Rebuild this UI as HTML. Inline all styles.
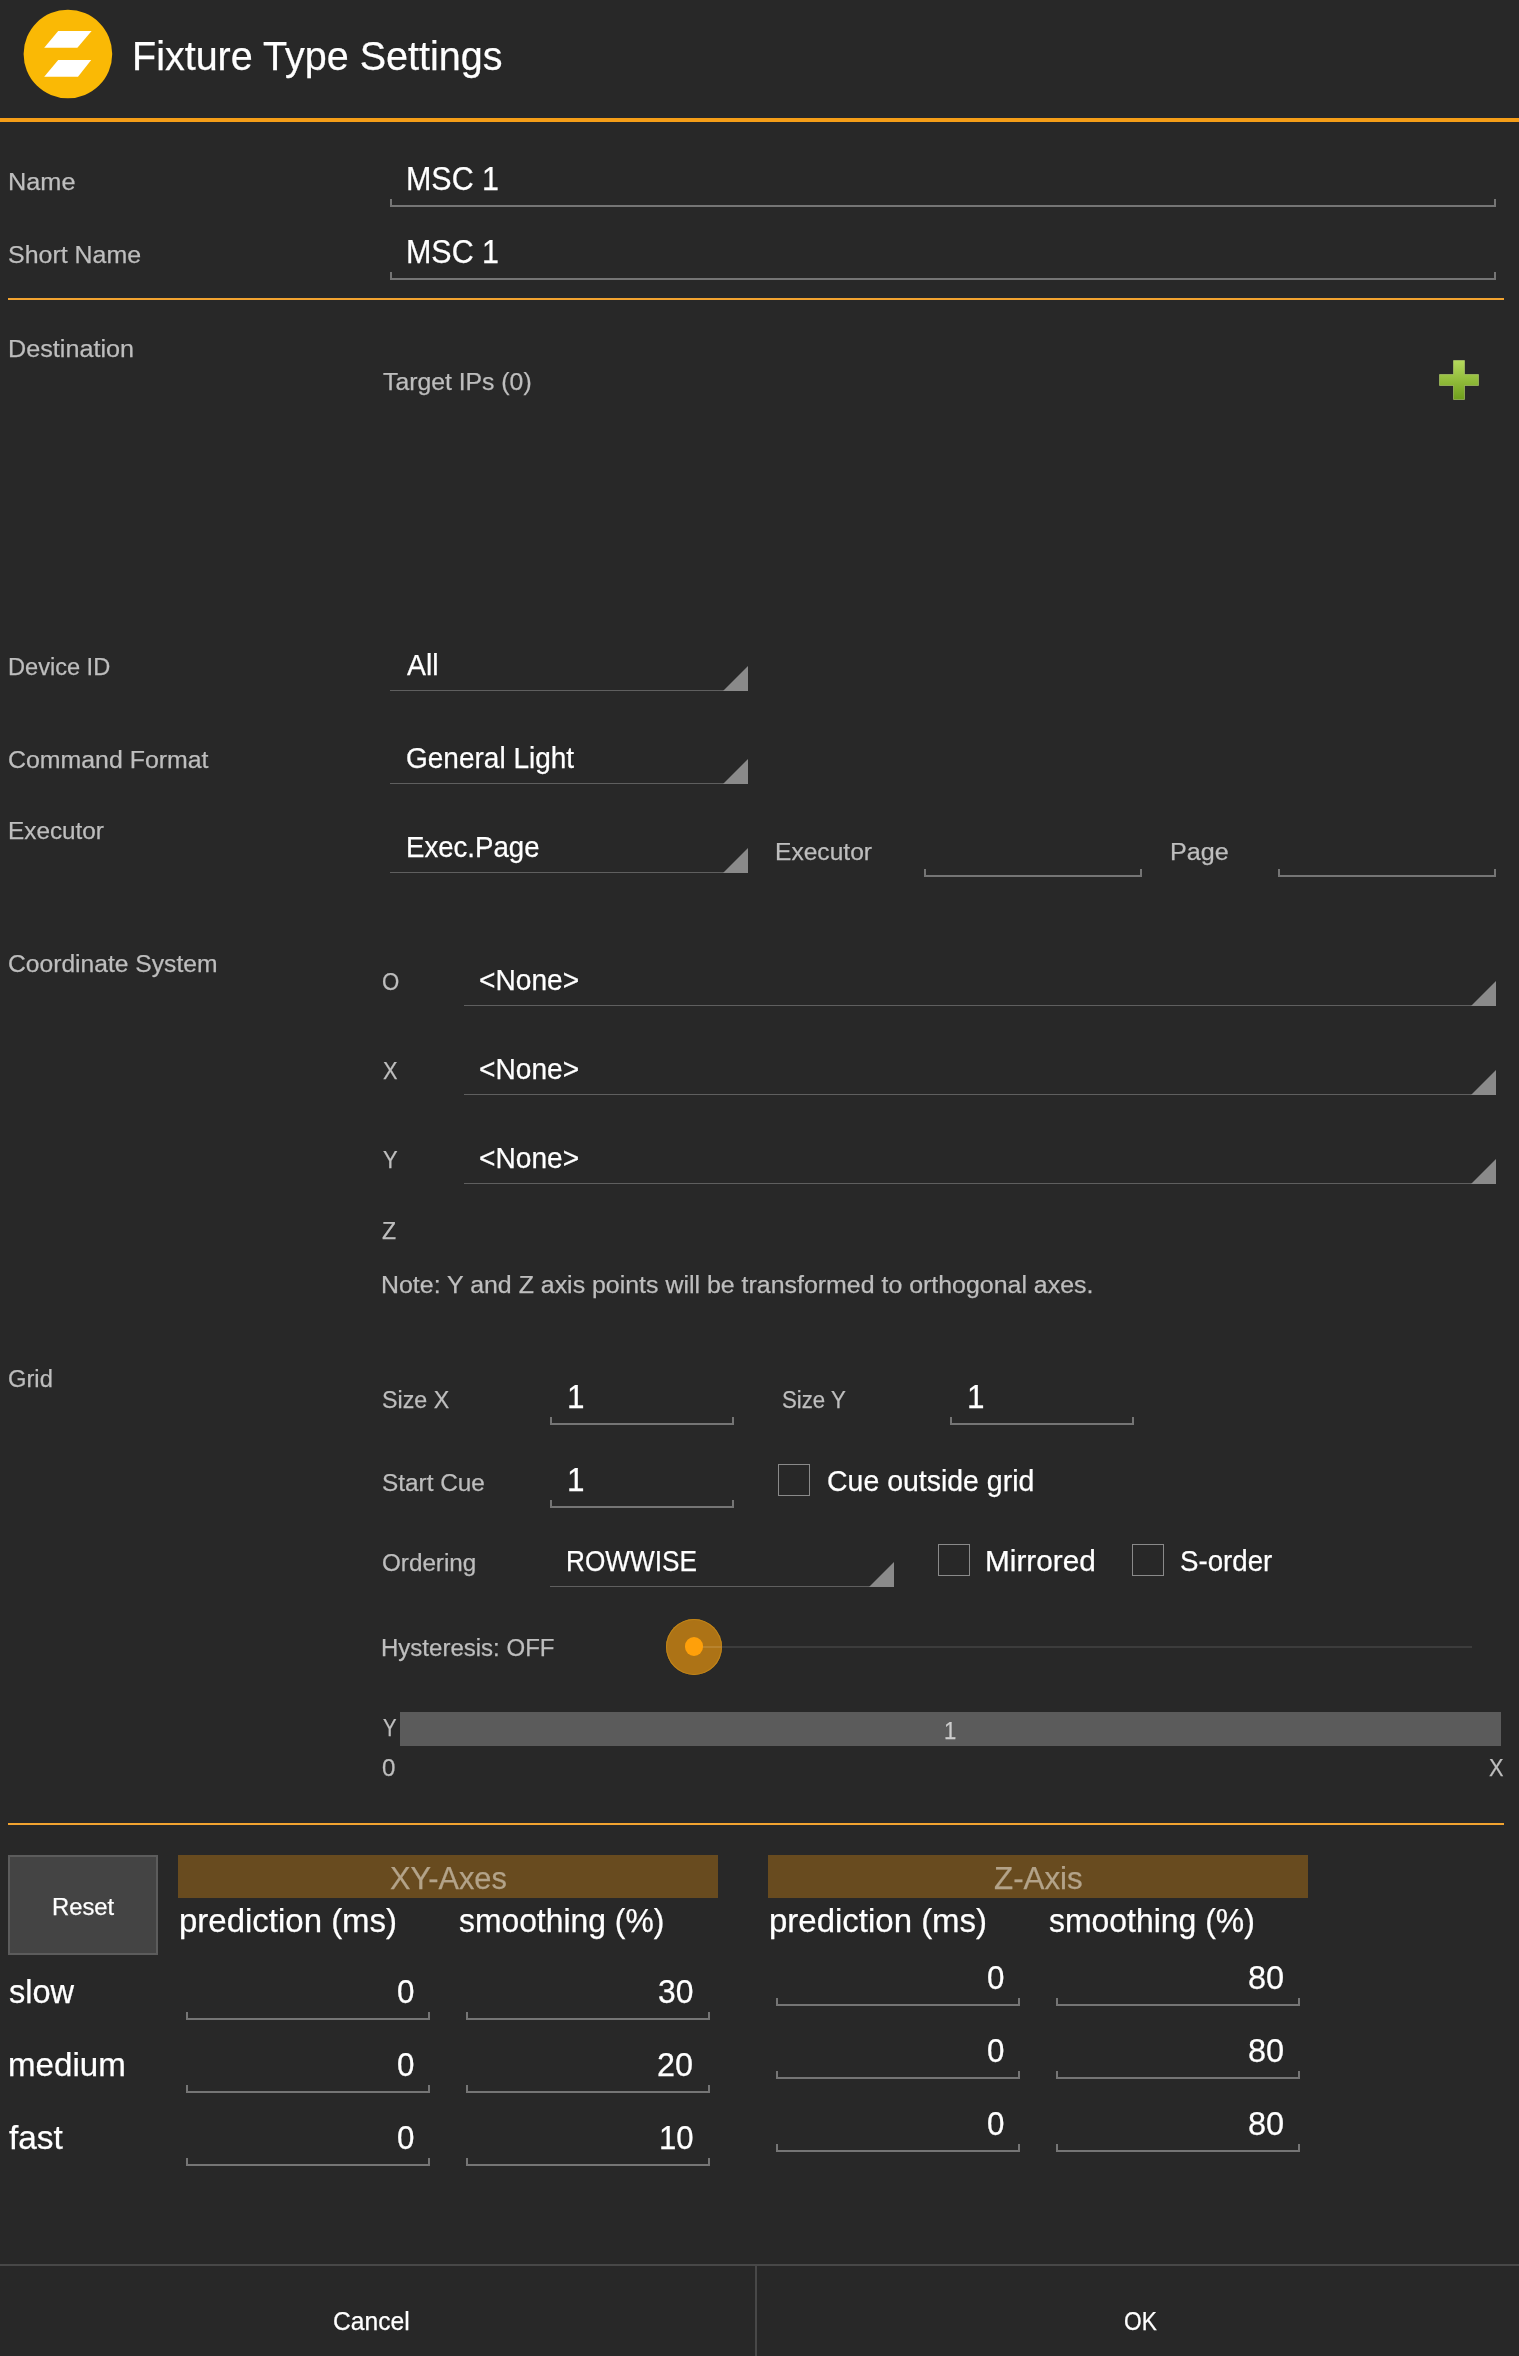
<!DOCTYPE html>
<html lang="en">
<head>
<meta charset="utf-8">
<title>Fixture Type Settings</title>
<style>
html,body{margin:0;padding:0;background:#282828;}
body{width:1519px;height:2356px;position:relative;overflow:hidden;font-family:"Liberation Sans", sans-serif;}
.t{position:absolute;white-space:pre;line-height:1em;transform-origin:0 0;display:block;-webkit-text-stroke:0.25px currentColor;}
.b{position:absolute;display:block;}
#txt{position:absolute;left:0;top:0;width:1519px;height:2356px;will-change:transform;}
.hl{background:#f2a330;}
.ed{border:2px solid #757575;border-top:0;box-sizing:border-box;height:8px;}
.sp{background:#5f5f5f;}
.tri{width:0;height:0;border-left:25px solid transparent;border-bottom:25px solid #8a8a8a;}
.cb{box-sizing:border-box;width:32px;height:32px;border:1px solid #8a8a8a;}

</style>
</head>
<body>
<svg class="b" style="left:22px;top:8px" width="92" height="92" viewBox="22 8 92 92"><circle cx="67.9" cy="54.05" r="44.3" fill="#fab905"/><polygon points="58.2,31 91.6,31 77.4,47.8 44.2,47.8" fill="#fff"/><polygon points="58.2,60 91.2,60 78,76.75 44.2,76.75" fill="#fff"/></svg>
<div class="b " style="left:0px;top:118px;width:1519px;height:4px;background:#f59e18"></div>
<div class="b hl" style="left:8px;top:298px;width:1496px;height:2px;"></div>
<div class="b hl" style="left:8px;top:1823px;width:1496px;height:2px;"></div>
<div class="b ed" style="left:390px;top:199px;width:1106px"></div>
<div class="b ed" style="left:390px;top:272px;width:1106px"></div>
<div class="b ed" style="left:924px;top:869px;width:218px"></div>
<div class="b ed" style="left:1278px;top:869px;width:218px"></div>
<div class="b ed" style="left:550px;top:1417px;width:184px"></div>
<div class="b ed" style="left:950px;top:1417px;width:184px"></div>
<div class="b ed" style="left:550px;top:1500px;width:184px"></div>
<div class="b ed" style="left:186px;top:2012px;width:244px"></div>
<div class="b ed" style="left:466px;top:2012px;width:244px"></div>
<div class="b ed" style="left:186px;top:2085px;width:244px"></div>
<div class="b ed" style="left:466px;top:2085px;width:244px"></div>
<div class="b ed" style="left:186px;top:2158px;width:244px"></div>
<div class="b ed" style="left:466px;top:2158px;width:244px"></div>
<div class="b ed" style="left:776px;top:1998px;width:244px"></div>
<div class="b ed" style="left:1056px;top:1998px;width:244px"></div>
<div class="b ed" style="left:776px;top:2071px;width:244px"></div>
<div class="b ed" style="left:1056px;top:2071px;width:244px"></div>
<div class="b ed" style="left:776px;top:2144px;width:244px"></div>
<div class="b ed" style="left:1056px;top:2144px;width:244px"></div>
<div class="b sp" style="left:390px;top:690px;width:358px;height:1px;"></div>
<div class="b tri" style="left:723px;top:666px"></div>
<div class="b sp" style="left:390px;top:783px;width:358px;height:1px;"></div>
<div class="b tri" style="left:723px;top:759px"></div>
<div class="b sp" style="left:390px;top:872px;width:358px;height:1px;"></div>
<div class="b tri" style="left:723px;top:848px"></div>
<div class="b sp" style="left:464px;top:1005px;width:1032px;height:1px;"></div>
<div class="b tri" style="left:1471px;top:981px"></div>
<div class="b sp" style="left:464px;top:1094px;width:1032px;height:1px;"></div>
<div class="b tri" style="left:1471px;top:1070px"></div>
<div class="b sp" style="left:464px;top:1183px;width:1032px;height:1px;"></div>
<div class="b tri" style="left:1471px;top:1159px"></div>
<div class="b sp" style="left:550px;top:1586px;width:344px;height:1px;"></div>
<div class="b tri" style="left:869px;top:1562px"></div>
<div class="b cb" style="left:778px;top:1464px"></div>
<div class="b cb" style="left:938px;top:1544px"></div>
<div class="b cb" style="left:1132px;top:1544px"></div>
<div class="b " style="left:694px;top:1646px;width:778px;height:2px;background:#3c3c3c"></div>
<div class="b" style="left:665.75px;top:1618.5px;width:56.5px;height:56.5px;border-radius:50%;background:#ad7316;box-shadow:inset 0 0 0 1px #c08418"></div>
<div class="b" style="left:694px;top:1646px;width:28px;height:2px;background:#b8832e"></div>
<div class="b" style="left:684.6px;top:1637.4px;width:18.8px;height:18.8px;border-radius:50%;background:#ffa00a"></div>
<div class="b " style="left:400px;top:1712px;width:1101px;height:34px;background:#5b5b5b"></div>
<svg class="b" style="left:1435px;top:356px" width="48" height="48" viewBox="1435 356 48 48"><defs><linearGradient id="pg" x1="0" y1="0" x2="0" y2="1"><stop offset="0" stop-color="#b5d95c"/><stop offset="1" stop-color="#6f9f1c"/></linearGradient></defs><path d="M1453.5 360.5h11v14h14v11h-14v14h-11v-14h-14v-11h14z" fill="url(#pg)" stroke="#c8e67a" stroke-opacity=".5" stroke-width="1"/></svg>
<div class="b " style="left:8px;top:1855px;width:150px;height:100px;background:#444;border:2px solid #5c5c5c;box-sizing:border-box"></div>
<div class="b " style="left:178px;top:1855px;width:540px;height:43px;background:#684b1f"></div>
<div class="b " style="left:768px;top:1855px;width:540px;height:43px;background:#684b1f"></div>
<div class="b " style="left:0px;top:2264px;width:1519px;height:2px;background:#484848"></div>
<div class="b " style="left:755px;top:2266px;width:2px;height:90px;background:#484848"></div>
<div id="txt">
<span class="t " style="left:131.94px;top:36px;font-size:41.20px;color:#ffffff;transform:scaleX(0.9593)">Fixture Type Settings</span>
<span class="t " style="left:7.83px;top:170px;font-size:24.72px;color:#bebebe;transform:scaleX(1.0239)">Name</span>
<span class="t " style="left:8.23px;top:243px;font-size:24.72px;color:#bebebe;transform:scaleX(1.0092)">Short Name</span>
<span class="t " style="left:7.84px;top:337px;font-size:24.72px;color:#bebebe;transform:scaleX(1.0189)">Destination</span>
<span class="t " style="left:382.60px;top:370px;font-size:24.72px;color:#bebebe;transform:scaleX(1.0018)">Target IPs (0)</span>
<span class="t " style="left:7.71px;top:655px;font-size:24.72px;color:#bebebe;transform:scaleX(0.9538)">Device ID</span>
<span class="t " style="left:8.36px;top:748px;font-size:24.72px;color:#bebebe;transform:scaleX(1.0067)">Command Format</span>
<span class="t " style="left:7.65px;top:819px;font-size:24.72px;color:#bebebe;transform:scaleX(0.9837)">Executor</span>
<span class="t " style="left:775.13px;top:840px;font-size:24.72px;color:#bebebe;transform:scaleX(0.9942)">Executor</span>
<span class="t " style="left:1169.59px;top:840px;font-size:24.72px;color:#bebebe;transform:scaleX(1.0176)">Page</span>
<span class="t " style="left:8.37px;top:952px;font-size:24.72px;color:#bebebe;transform:scaleX(0.9965)">Coordinate System</span>
<span class="t " style="left:382.10px;top:970px;font-size:24.72px;color:#bebebe;transform:scaleX(0.8976)">O</span>
<span class="t " style="left:382.67px;top:1059px;font-size:24.72px;color:#bebebe;transform:scaleX(0.8797)">X</span>
<span class="t " style="left:382.66px;top:1148px;font-size:24.72px;color:#bebebe;transform:scaleX(0.8867)">Y</span>
<span class="t " style="left:382.41px;top:1219px;font-size:24.72px;color:#bebebe;transform:scaleX(0.9341)">Z</span>
<span class="t " style="left:381.11px;top:1273px;font-size:24.72px;color:#bebebe;transform:scaleX(1.0081)">Note: Y and Z axis points will be transformed to orthogonal axes.</span>
<span class="t " style="left:8.41px;top:1367px;font-size:24.72px;color:#bebebe;transform:scaleX(0.9601)">Grid</span>
<span class="t " style="left:382.05px;top:1388px;font-size:24.72px;color:#bebebe;transform:scaleX(0.9398)">Size X</span>
<span class="t " style="left:782.10px;top:1388px;font-size:24.72px;color:#bebebe;transform:scaleX(0.8984)">Size Y</span>
<span class="t " style="left:382.00px;top:1471px;font-size:24.72px;color:#bebebe;transform:scaleX(0.9845)">Start Cue</span>
<span class="t " style="left:382.01px;top:1551px;font-size:24.72px;color:#bebebe;transform:scaleX(0.9802)">Ordering</span>
<span class="t " style="left:381.18px;top:1636px;font-size:24.72px;color:#bebebe;transform:scaleX(0.9717)">Hysteresis: OFF</span>
<span class="t " style="left:382.69px;top:1716px;font-size:24.72px;color:#bebebe;transform:scaleX(0.8220)">Y</span>
<span class="t " style="left:382.26px;top:1756px;font-size:24.72px;color:#bebebe;transform:scaleX(0.9759)">0</span>
<span class="t " style="left:1489.17px;top:1756px;font-size:24.72px;color:#bebebe;transform:scaleX(0.8797)">X</span>
<span class="t " style="left:944.24px;top:1719px;font-size:24.72px;color:#cdcdcd;transform:scaleX(0.8928)">1</span>
<span class="t " style="left:405.66px;top:163px;font-size:32.96px;color:#ffffff;transform:scaleX(0.9237)">MSC 1</span>
<span class="t " style="left:405.66px;top:236px;font-size:32.96px;color:#ffffff;transform:scaleX(0.9237)">MSC 1</span>
<span class="t " style="left:406.60px;top:650px;font-size:29.87px;color:#ffffff;transform:scaleX(0.9509)">All</span>
<span class="t " style="left:406.20px;top:743px;font-size:29.87px;color:#ffffff;transform:scaleX(0.9378)">General Light</span>
<span class="t " style="left:405.89px;top:832px;font-size:29.87px;color:#ffffff;transform:scaleX(0.9244)">Exec.Page</span>
<span class="t " style="left:479.33px;top:965px;font-size:29.87px;color:#ffffff;transform:scaleX(0.9427)">&lt;None&gt;</span>
<span class="t " style="left:479.33px;top:1054px;font-size:29.87px;color:#ffffff;transform:scaleX(0.9427)">&lt;None&gt;</span>
<span class="t " style="left:479.33px;top:1143px;font-size:29.87px;color:#ffffff;transform:scaleX(0.9427)">&lt;None&gt;</span>
<span class="t " style="left:566.74px;top:1381px;font-size:32.96px;color:#ffffff;transform:scaleX(0.9555)">1</span>
<span class="t " style="left:966.74px;top:1381px;font-size:32.96px;color:#ffffff;transform:scaleX(0.9555)">1</span>
<span class="t " style="left:566.74px;top:1464px;font-size:32.96px;color:#ffffff;transform:scaleX(0.9555)">1</span>
<span class="t " style="left:826.68px;top:1466px;font-size:29.87px;color:#ffffff;transform:scaleX(0.9533)">Cue outside grid</span>
<span class="t " style="left:566.01px;top:1546px;font-size:29.87px;color:#ffffff;transform:scaleX(0.8765)">ROWWISE</span>
<span class="t " style="left:984.72px;top:1546px;font-size:29.87px;color:#ffffff;transform:scaleX(0.9974)">Mirrored</span>
<span class="t " style="left:1180.35px;top:1546px;font-size:29.87px;color:#ffffff;transform:scaleX(0.9268)">S-order</span>
<span class="t " style="left:51.70px;top:1895px;font-size:24.72px;color:#ffffff;transform:scaleX(0.9628)">Reset</span>
<span class="t " style="left:389.98px;top:1864px;font-size:30.90px;color:#b3a389;transform:scaleX(0.9959)">XY-Axes</span>
<span class="t " style="left:993.66px;top:1864px;font-size:30.90px;color:#b3a389;transform:scaleX(1.0137)">Z-Axis</span>
<span class="t " style="left:178.62px;top:1905px;font-size:32.96px;color:#ffffff;transform:scaleX(1.0006)">prediction (ms)</span>
<span class="t " style="left:458.80px;top:1905px;font-size:32.96px;color:#ffffff;transform:scaleX(0.9664)">smoothing (%)</span>
<span class="t " style="left:768.62px;top:1905px;font-size:32.96px;color:#ffffff;transform:scaleX(1.0006)">prediction (ms)</span>
<span class="t " style="left:1049.30px;top:1905px;font-size:32.96px;color:#ffffff;transform:scaleX(0.9688)">smoothing (%)</span>
<span class="t " style="left:8.79px;top:1976px;font-size:32.96px;color:#ffffff;transform:scaleX(0.9876)">slow</span>
<span class="t " style="left:7.65px;top:2049px;font-size:32.96px;color:#ffffff;transform:scaleX(1.0044)">medium</span>
<span class="t " style="left:9.27px;top:2122px;font-size:32.96px;color:#ffffff;transform:scaleX(1.0113)">fast</span>
<span class="t " style="left:396.50px;top:1976px;font-size:32.96px;color:#ffffff;transform:scaleX(0.9509)">0</span>
<span class="t " style="left:657.98px;top:1976px;font-size:32.96px;color:#ffffff;transform:scaleX(0.9675)">30</span>
<span class="t " style="left:396.50px;top:2049px;font-size:32.96px;color:#ffffff;transform:scaleX(0.9509)">0</span>
<span class="t " style="left:657.48px;top:2049px;font-size:32.96px;color:#ffffff;transform:scaleX(0.9816)">20</span>
<span class="t " style="left:396.50px;top:2122px;font-size:32.96px;color:#ffffff;transform:scaleX(0.9509)">0</span>
<span class="t " style="left:658.76px;top:2122px;font-size:32.96px;color:#ffffff;transform:scaleX(0.9455)">10</span>
<span class="t " style="left:986.50px;top:1962px;font-size:32.96px;color:#ffffff;transform:scaleX(0.9509)">0</span>
<span class="t " style="left:1248.30px;top:1962px;font-size:32.96px;color:#ffffff;transform:scaleX(0.9868)">80</span>
<span class="t " style="left:986.50px;top:2035px;font-size:32.96px;color:#ffffff;transform:scaleX(0.9509)">0</span>
<span class="t " style="left:1248.30px;top:2035px;font-size:32.96px;color:#ffffff;transform:scaleX(0.9868)">80</span>
<span class="t " style="left:986.50px;top:2108px;font-size:32.96px;color:#ffffff;transform:scaleX(0.9509)">0</span>
<span class="t " style="left:1248.30px;top:2108px;font-size:32.96px;color:#ffffff;transform:scaleX(0.9868)">80</span>
<span class="t " style="left:332.67px;top:2309px;font-size:25.23px;color:#ffffff;transform:scaleX(0.9760)">Cancel</span>
<span class="t " style="left:1124.18px;top:2309px;font-size:25.23px;color:#ffffff;transform:scaleX(0.8991)">OK</span>
</div>
</body>
</html>
